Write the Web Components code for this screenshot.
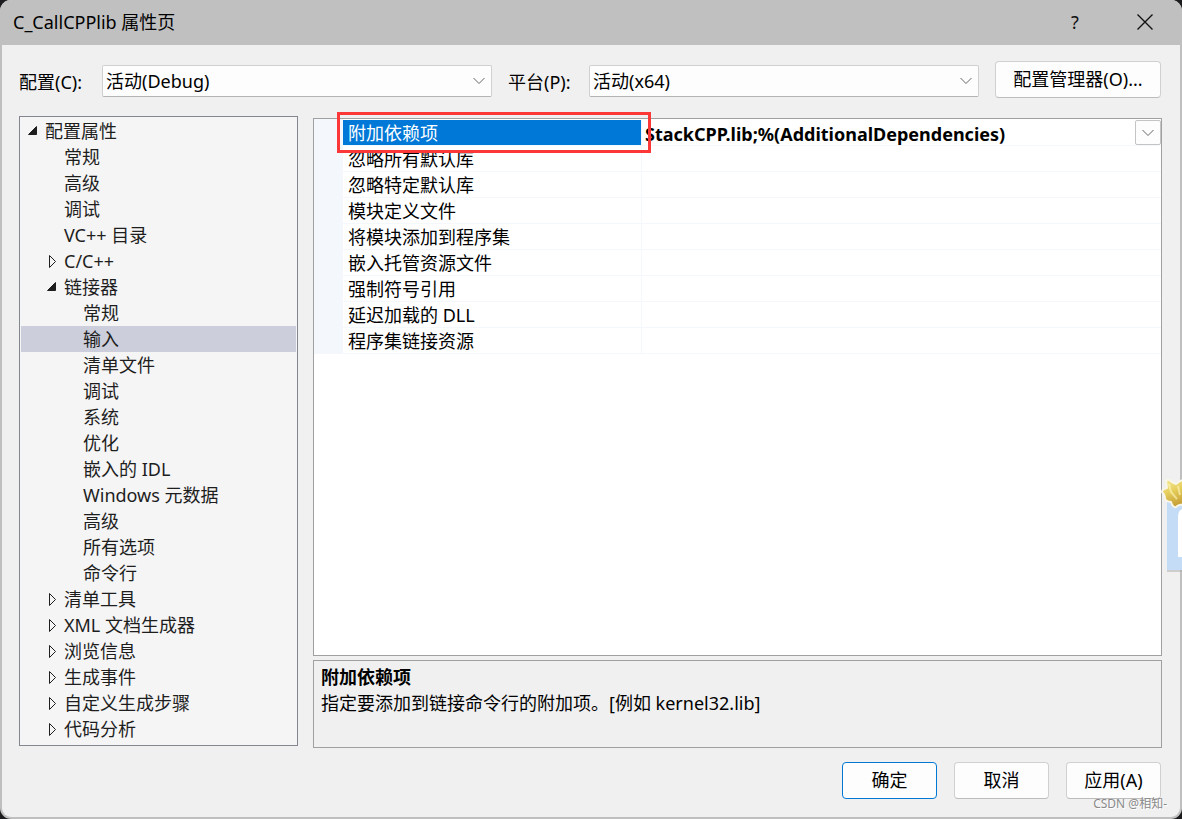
<!DOCTYPE html>
<html lang="zh-CN">
<head>
<meta charset="utf-8">
<title>C_CallCPPlib 属性页</title>
<style>
  body {
    margin: 0;
    background: #1c1c1e;
    color: #000;
    font: 18px/26px "Noto Sans", "Noto Sans CJK SC", sans-serif;
  }
</style>
</head>
<body>
<property-dialog>
  <dialog-titlebar slot="title">C_CallCPPlib 属性页</dialog-titlebar>
  <config-bar slot="config"></config-bar>
  <property-tree slot="tree"></property-tree>
  <property-grid slot="grid"></property-grid>
  <property-help slot="help">
    <span slot="name">附加依赖项</span>
    指定要添加到链接命令行的附加项。[例如 kernel32.lib]
  </property-help>
  <push-button slot="actions" primary>确定</push-button>
  <push-button slot="actions">取消</push-button>
  <push-button slot="actions">应用(A)</push-button>
</property-dialog>

<script>
const define = (name, html, setup) => {
  const template = document.createElement('template');
  template.innerHTML = html;
  customElements.define(name, class extends HTMLElement {
    constructor() {
      super();
      this.attachShadow({ mode: 'open' }).append(template.content.cloneNode(true));
      if (setup) setup(this, this.shadowRoot);
    }
  });
};

const chevron = '<svg width="14" height="8" viewBox="0 0 14 8" aria-hidden="true"><path d="M1.5 1 L7 6.5 L12.5 1" fill="none" stroke="#666"/></svg>';

define('push-button', `
  <style>
    :host { display: block; min-width: 95px; }
    button {
      box-sizing: border-box; width: 100%; height: 37px; padding: 0 8px 2px;
      font: inherit; color: inherit; white-space: nowrap;
      background: #fdfdfd; border: 1px solid #d0d0d0; border-bottom-color: #bcbcbc; border-radius: 4px;
    }
    :host([primary]) button { border-color: #0078d4; }
  </style>
  <button type="button"><slot></slot></button>`);

define('dialog-titlebar', `
  <style>
    :host { display: flex; align-items: center; height: 45px; padding: 0 2px 0 13px; background: #c0c0c0; }
    h1 { flex: 1; margin: 0; padding-bottom: 2px; font: inherit; }
    button { width: 70px; height: 45px; padding: 0 0 2px; border: 0; background: none; font: inherit; color: #111; }
    svg { display: block; margin: auto; }
  </style>
  <h1><slot></slot></h1>
  <button type="button" aria-label="帮助">?</button>
  <button type="button" aria-label="关闭"><svg width="16" height="16" viewBox="0 0 16 16"><path d="M.5 .5 L15.5 15.5 M15.5 .5 L.5 15.5" fill="none" stroke="#111" stroke-width="1.4"/></svg></button>`);

define('config-bar', `
  <style>
    :host { display: grid; grid-template-columns: 83px 1fr 97px 1fr 16px 166px; align-items: end; }
    label { padding-bottom: 3px; }
    label:nth-of-type(2) { padding-left: 16px; }
    .combo { display: grid; align-items: center; padding-bottom: 1px; }
    .combo > * { grid-area: 1 / 1; }
    select {
      appearance: none; box-sizing: border-box; width: 100%; height: 32px; padding: 0 24px 0 3px;
      font: inherit; color: inherit; background: #fdfdfd;
      border: 1px solid #d0d0d0; border-bottom-color: #b4b4b4; border-radius: 2px;
    }
    svg { justify-self: end; margin-right: 6px; pointer-events: none; }
    push-button { grid-column: 6; }
  </style>
  <label for="configuration">配置(C):</label>
  <div class="combo"><select id="configuration"><option>活动(Debug)</option></select>${chevron}</div>
  <label for="platform">平台(P):</label>
  <div class="combo"><select id="platform"><option>活动(x64)</option></select>${chevron}</div>
  <push-button>配置管理器(O)...</push-button>`);

define('tree-item', `
  <style>
    :host { display: flex; align-items: center; gap: 5px; height: 26px; padding-left: calc(5px + 19px * var(--level)); white-space: nowrap; }
    :host([aria-selected="true"]) { background: #cccedb; }
    svg { width: 14px; height: 16px; visibility: hidden; }
    path { display: none; stroke: #1e1e1e; }
    :host([aria-expanded]) svg { visibility: visible; }
    :host([aria-expanded="true"]) .open, :host([aria-expanded="false"]) .closed { display: block; }
  </style>
  <svg viewBox="0 0 14 16" aria-hidden="true">
    <path class="open" d="M10.5 3.5 V11.5 H2.5 Z" fill="#1e1e1e"/>
    <path class="closed" d="M4.5 2.5 L10.5 8.5 L4.5 14.5 Z" fill="none"/>
  </svg>
  <slot></slot>`);

const nodes = [
  [0, '配置属性', true], [1, '常规'], [1, '高级'], [1, '调试'], [1, 'VC++ 目录'],
  [1, 'C/C++', false], [1, '链接器', true],
  [2, '常规'], [2, '输入'], [2, '清单文件'], [2, '调试'], [2, '系统'], [2, '优化'],
  [2, '嵌入的 IDL'], [2, 'Windows 元数据'], [2, '高级'], [2, '所有选项'], [2, '命令行'],
  [1, '清单工具', false], [1, 'XML 文档生成器', false], [1, '浏览信息', false],
  [1, '生成事件', false], [1, '自定义生成步骤', false], [1, '代码分析', false]
];

define('property-tree', `
  <style>
    :host { display: block; padding: 1px; background: #f5f5f5; border: 1px solid #828790; color: #1e1e1e; }
  </style>
  <div role="tree" aria-label="配置属性"></div>`, (host, root) => {
  const tree = root.querySelector('div');
  for (const [level, text, expanded] of nodes) {
    const item = document.createElement('tree-item');
    item.setAttribute('role', 'treeitem');
    item.setAttribute('aria-level', level + 1);
    item.style.setProperty('--level', level);
    if (expanded !== undefined) item.setAttribute('aria-expanded', expanded);
    if (text === '输入') item.setAttribute('aria-selected', 'true');
    item.textContent = text;
    tree.append(item);
  }
});

const properties = ['忽略所有默认库', '忽略特定默认库', '模块定义文件', '将模块添加到程序集', '嵌入托管资源文件', '强制符号引用', '延迟加载的 DLL', '程序集链接资源'];

define('property-grid', `
  <style>
    :host { display: block; background: #fff; border: 1px solid #a0a0a0; }
    table { width: 100%; border-spacing: 0; table-layout: fixed; }
    .gutter { width: 29px; }
    .name { width: 299px; }
    td, th { box-sizing: border-box; height: 26px; padding: 0; border-bottom: 1px solid #f4f7fc; line-height: 24px; font-weight: normal; text-align: left; white-space: nowrap; }
    td:first-child { background: #f4f7fc; }
    th { padding: 1px 0 0 5px; border-right: 1px solid #f4f7fc; }
    tr:first-child > * { height: 27px; border-top: 1px solid transparent; background-clip: padding-box; }
    tr:first-child > td:first-child { background-clip: border-box; }
    tr:first-child > th { position: relative; background-color: #0078d7; color: #fff; }
    .marker { position: absolute; z-index: 1; inset: -8px -10px -8px -6px; border: 3px solid #fb3738; pointer-events: none; }
    .editor { display: flex; height: 25px; }
    input { flex: 1; min-width: 0; padding: 2px 0 0 3px; border: 0; outline: 0; background: none; color: inherit; font: inherit; font-weight: bold; }
    button { display: grid; place-items: center; width: 26px; height: 25px; padding: 0; background: #fdfdfd; border: 1px solid #c4c4c4; border-radius: 2px; }
  </style>
  <table aria-label="属性">
    <colgroup><col class="gutter"><col class="name"><col></colgroup>
    <tbody>
      <tr><td></td><th scope="row"><span id="dependencies">附加依赖项</span><div class="marker"></div></th>
      <td><div class="editor"><input type="text" aria-labelledby="dependencies" value="StackCPP.lib;%(AdditionalDependencies)"><button type="button" aria-label="编辑">${chevron}</button></div></td></tr>
      ${properties.map(p => `<tr><td></td><th scope="row">${p}</th><td></td></tr>`).join('')}
    </tbody>
  </table>`);

define('property-help', `
  <style>
    :host { display: block; box-sizing: border-box; height: 88px; padding: 3px 7px; border: 1px solid #a0a0a0; }
    strong { display: block; }
  </style>
  <strong><slot name="name"></slot></strong>
  <slot></slot>`);

define('corner-sticker', `
  <style>:host { display: block; } svg { display: block; }</style>
  <svg width="22" height="102" viewBox="0 0 22 102" aria-hidden="true">
    <defs><linearGradient id="gold" x1="0" y1="0" x2="0.3" y2="1"><stop offset="0" stop-color="#f7eda0"/><stop offset=".5" stop-color="#e6ce5c"/><stop offset="1" stop-color="#c9a33a"/></linearGradient></defs>
    <path d="M7 30H22V97H7Z" fill="#aaa" opacity=".5"/>
    <path d="M7 26H22V95H7Z" fill="#c4dcf6"/>
    <path d="M22 34Q18 36 18 42V82H22Z" fill="#fff"/>
    <path d="M6 6Q8 3 12 7L16 9Q20 5 24 5V31Q20 28 16 32Q13 33 11 27Q4 26 5 22Q5 20 2 17Q2 14 7 13Z" fill="url(#gold)" stroke="#f8f6e8" stroke-width="2" stroke-linejoin="round"/>
    <path d="M9 9L11 17L17 24M18 11L20 20" fill="none" stroke="#fff8bc" stroke-width="2" opacity=".6"/>
  </svg>`);

define('property-dialog', `
  <style>
    :host { position: relative; display: flex; flex-direction: column; box-sizing: border-box; min-height: 100vh; background: #f0f0f0; border: solid #bfbfbf; border-width: 0 2px 2px; border-radius: 11px; }
    .content { flex: 1; display: flex; flex-direction: column; padding: 16px 18px 18px 17px; }
    ::slotted(config-bar) { padding-right: 1px; }
    ::slotted(dialog-titlebar) { margin: 0 -2px; border-radius: 11px 11px 0 0; }
    main { flex: 1; display: flex; gap: 15px; margin: 18px 0 14px; }
    ::slotted(property-tree) { flex: none; box-sizing: border-box; width: 279px; margin-bottom: 2px; }
    .details { flex: 1; min-width: 0; display: flex; flex-direction: column; gap: 4px; padding-top: 2px; }
    ::slotted(property-grid) { flex: 1; }
    footer { display: flex; justify-content: flex-end; gap: 17px; padding-right: 1px; }
    corner-sticker { position: absolute; top: 475px; right: -2px; }
    .watermark { position: absolute; right: 13px; bottom: 5px; font-size: 12px; line-height: 16px; color: #8a8a8a; text-shadow: 1px 1px #fff; }
  </style>
  <slot name="title"></slot>
  <div class="content">
    <slot name="config"></slot>
    <main>
      <slot name="tree"></slot>
      <div class="details"><slot name="grid"></slot><slot name="help"></slot></div>
    </main>
    <footer><slot name="actions"></slot></footer>
  </div>
  <corner-sticker></corner-sticker>
  <div class="watermark">CSDN @相知-</div>`);
</script>
</body>
</html>
